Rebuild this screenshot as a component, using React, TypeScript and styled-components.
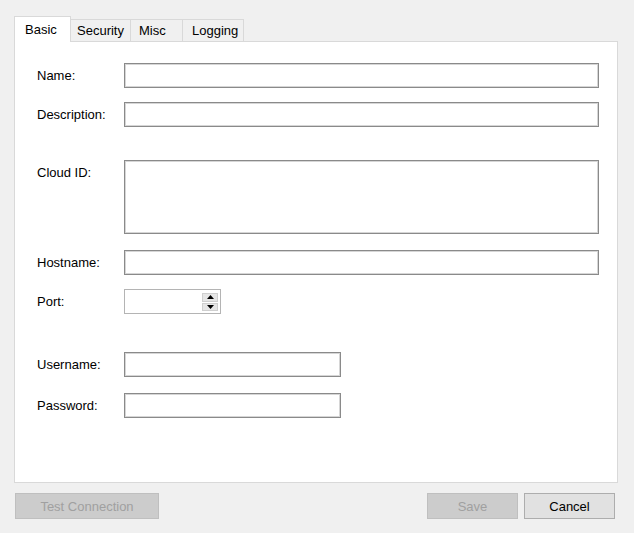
import styled, { createGlobalStyle } from 'styled-components'

const GlobalStyle = createGlobalStyle`
  html, body {
    margin: 0;
    padding: 0;
    background: #f0f0f0;
  }
  body {
    font-family: 'Liberation Sans', Arial, sans-serif;
    font-size: 13px;
    color: #000;
  }
`

type Field = { label: string; top: number; height?: number; width?: number; spin?: boolean }

const fields: Field[] = [
  { label: 'Name:', top: 0 },
  { label: 'Description:', top: 14 },
  { label: 'Cloud ID:', top: 33, height: 74 },
  { label: 'Hostname:', top: 16 },
  { label: 'Port:', top: 14, width: 97, spin: true },
  { label: 'Username:', top: 38, width: 217 },
  { label: 'Password:', top: 16, width: 217 }
]

const tabs = [
  { name: 'Basic', width: 57, pad: 10 },
  { name: 'Security', width: 60, pad: 6 },
  { name: 'Misc', width: 52, pad: 8 },
  { name: 'Logging', width: 61, pad: 9 }
]

export default function App() {
  return (
    <>
      <GlobalStyle />
      <Window>
        <TabStrip>
          {tabs.map((t, i) => (
            <Tab key={t.name} $active={i === 0} $width={t.width} $pad={t.pad}>
              {t.name}
            </Tab>
          ))}
        </TabStrip>
        <Panel>
          {fields.map((f) => (
            <Row key={f.label} $top={f.top}>
              <Label>{f.label}</Label>
              {f.spin ? (
                <SpinBox>
                  <Spinner>
                    <SpinButton>
                      <svg width="7" height="4" viewBox="0 0 7 4">
                        <polygon points="3.5,0 7,4 0,4" fill="#000" />
                      </svg>
                    </SpinButton>
                    <SpinButton>
                      <svg width="7" height="4" viewBox="0 0 7 4">
                        <polygon points="0,0 7,0 3.5,4" fill="#000" />
                      </svg>
                    </SpinButton>
                  </Spinner>
                </SpinBox>
              ) : (
                <TextBox $height={f.height ?? 25} $width={f.width} />
              )}
            </Row>
          ))}
        </Panel>
        <ButtonBar>
          <Button disabled $width={144}>Test Connection</Button>
          <Spacer />
          <Button disabled $width={91}>Save</Button>
          <Button $width={91}>Cancel</Button>
        </ButtonBar>
      </Window>
    </>
  )
}

const Window = styled.div`
  width: 634px;
  height: 533px;
  box-sizing: border-box;
  padding: 16px 16px 0 14px;
  display: flex;
  flex-direction: column;
`

const TabStrip = styled.div`
  display: flex;
  align-items: flex-end;
  height: 25px;
  position: relative;
  z-index: 1;
`

const Tab = styled.div<{ $active: boolean; $width: number; $pad: number }>`
  box-sizing: border-box;
  width: ${(p) => p.$width}px;
  padding-left: ${(p) => p.$pad}px;
  height: ${(p) => (p.$active ? 26 : 22)}px;
  margin-bottom: ${(p) => (p.$active ? -1 : 0)}px;
  padding-top: ${(p) => (p.$active ? 5 : 3)}px;
  background: ${(p) => (p.$active ? '#fff' : '#f0f0f0')};
  border-top: 1px solid #d9d9d9;
  border-right: 1px solid #d9d9d9;
  border-left: ${(p) => (p.$active ? '1px solid #d9d9d9' : 'none')};
  line-height: 15px;
  white-space: nowrap;
`

const Panel = styled.div`
  box-sizing: border-box;
  width: 604px;
  height: 442px;
  background: #fff;
  border: 1px solid #d9d9d9;
  padding: 21px 18px 0 22px;
  display: flex;
  flex-direction: column;
`

const Row = styled.div<{ $top: number }>`
  display: flex;
  align-items: flex-start;
  margin-top: ${(p) => p.$top}px;
`

const Label = styled.div`
  width: 87px;
  flex-shrink: 0;
  padding-top: 5px;
  line-height: 15px;
  color: #000;
`

const TextBox = styled.div<{ $height: number; $width?: number }>`
  box-sizing: border-box;
  height: ${(p) => p.$height}px;
  ${(p) => (p.$width ? `width: ${p.$width}px;` : 'flex: 1;')}
  background: #fff;
  border: 1px solid #8a8a8a;
  box-shadow: inset 0 0 0 1px #d6d6d6;
`

const SpinBox = styled.div`
  box-sizing: border-box;
  width: 97px;
  height: 25px;
  border: 1px solid #b4b4b4;
  background: #fff;
  display: flex;
  justify-content: flex-end;
  padding: 3px 2px 2px 0;
`

const Spinner = styled.div`
  width: 16px;
  display: flex;
  flex-direction: column;
  gap: 1px;
`

const SpinButton = styled.div`
  flex: 1;
  box-sizing: border-box;
  background: #e6e6e6;
  border: 1px solid #cfcfcf;
  display: flex;
  align-items: center;
  justify-content: center;
`

const ButtonBar = styled.div`
  display: flex;
  gap: 6px;
  margin-top: 10px;
  padding: 0 3px 0 1px;
`

const Spacer = styled.div`
  flex: 1;
`

const Button = styled.button<{ $width: number }>`
  box-sizing: border-box;
  width: ${(p) => p.$width}px;
  height: 26px;
  padding: 0;
  font-family: 'Liberation Sans', Arial, sans-serif;
  font-size: 13px;
  color: #000;
  background: #e1e1e1;
  border: 1px solid #adadad;
  border-radius: 0;

  &:disabled {
    background: #cccccc;
    border-color: #bfbfbf;
    color: #a0a0a0;
  }
`
